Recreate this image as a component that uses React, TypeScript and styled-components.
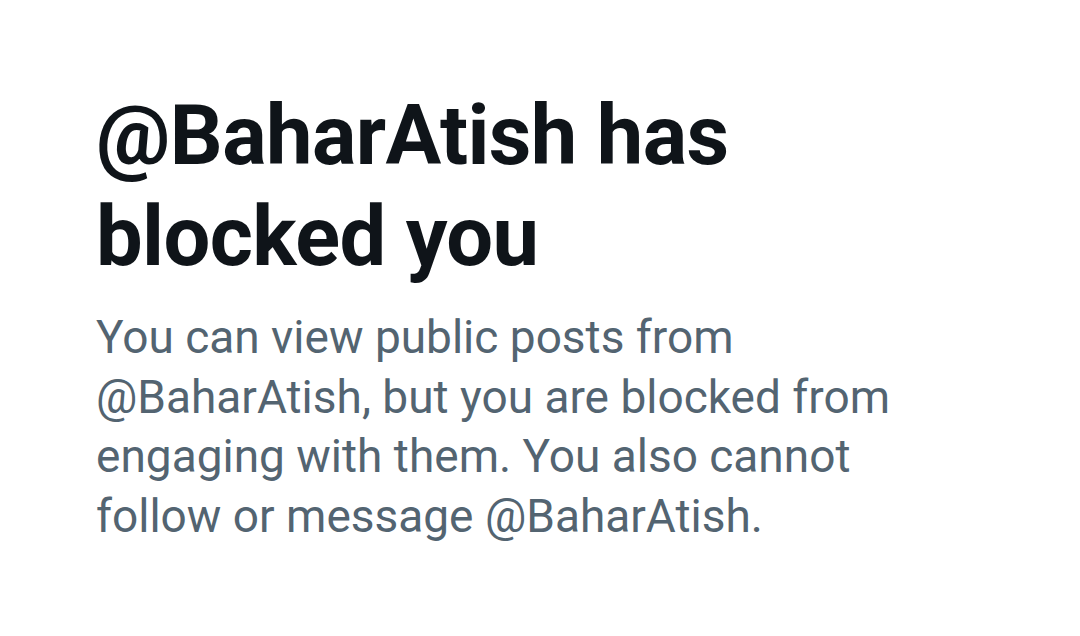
import React from 'react'
import styled, { createGlobalStyle } from 'styled-components'

const GlobalStyle = createGlobalStyle`
  html, body {
    margin: 0;
    padding: 0;
    background: #ffffff;
  }
  body {
    font-family: Roboto, "Liberation Sans", sans-serif;
  }
`;

const handle = "BaharAtish";

const App = () => {
  return (
    <>
      <GlobalStyle />
      <Page>
        <Notice>
          <Title>@{handle} has blocked you</Title>
          <Body>
            You can view public posts from @{handle}, but you are blocked from
            engaging with them. You also cannot follow or message @{handle}.
          </Body>
        </Notice>
      </Page>
    </>
  );
};

export default App;

const Page = styled.div`
  width: 1080px;
  height: 636px;
  background: #ffffff;
  overflow: hidden;
`;

const Notice = styled.div`
  display: flex;
  flex-direction: column;
  padding: 85px 0 0 96px;
  width: 820px;
`;

const Title = styled.h1`
  margin: 0;
  font-family: Roboto, "Liberation Sans", sans-serif;
  font-weight: 700;
  font-size: 83px;
  line-height: 101px;
  letter-spacing: -0.6px;
  color: #0f1419;
  width: 700px;
`;

const Body = styled.p`
  margin: 21px 0 0;
  font-family: Roboto, "Liberation Sans", sans-serif;
  font-weight: 400;
  font-size: 46px;
  line-height: 59.5px;
  color: #536471;
  width: 820px;
`;
